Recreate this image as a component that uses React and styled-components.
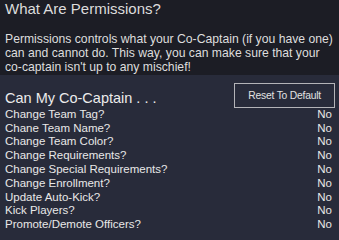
import styled, { createGlobalStyle } from "styled-components";

const GlobalStyle = createGlobalStyle`
  html, body {
    margin: 0;
    padding: 0;
    height: 100%;
    background: #282b3a;
  }

  #root {
    height: 100%;
  }
`

const Page = styled.div`
  height: 100%;
  display: flex;
  flex-direction: column;
  font-family: "Liberation Sans", Arial, sans-serif;
  color: #e4e4e4;
`

const Intro = styled.section`
  background: #1c1d25;
  padding: 0 2px 0 5px;
`

const Title = styled.h1`
  margin: 0;
  font-size: 15px;
  font-weight: normal;
  line-height: normal;
  color: #dcdcdc;
`

const Blurb = styled.p`
  margin: 16.4px 0 0;
  font-size: 12.2px;
  line-height: 13.8px;
  color: #dedede;
`

const Settings = styled.section`
  flex: 1;
  background: #282b3a;
  padding: 8px 4px 0 5px;
`

const Header = styled.div`
  display: flex;
  justify-content: space-between;
  align-items: flex-end;
`

const Subtitle = styled.h2`
  margin: 0 0 2px;
  font-size: 14.5px;
  font-weight: normal;
  line-height: normal;
  color: #ececec;
`

const ResetButton = styled.button`
  height: 25px;
  padding: 0 13px;
  background: transparent;
  border: 1px solid #b4b4b8;
  color: #e2e2e2;
  font-family: inherit;
  font-size: 10.3px;
  letter-spacing: -0.2px;
  cursor: pointer;
`

const List = styled.ul`
  list-style: none;
  margin: 0;
  padding: 0 3px 0 0;
`

const Row = styled.li`
  display: flex;
  justify-content: space-between;
  font-size: 11.5px;
  line-height: 13.8px;
  color: #e8e8e8;
`

const permissions = [
  "Change Team Tag?",
  "Chane Team Name?",
  "Change Team Color?",
  "Change Requirements?",
  "Change Special Requirements?",
  "Change Enrollment?",
  "Update Auto-Kick?",
  "Kick Players?",
  "Promote/Demote Officers?",
]

const App = () => {
  return (
    <Page>
      <GlobalStyle/>
      <Intro>
        <Title>What Are Permissions?</Title>
        <Blurb>
          Permissions controls what your Co-Captain (if you have one) can and cannot do. This way, you
          can make sure that your co-captain isn't up to any mischief!
        </Blurb>
      </Intro>
      <Settings>
        <Header>
          <Subtitle>Can My Co-Captain . . .</Subtitle>
          <ResetButton>Reset To Default</ResetButton>
        </Header>
        <List>
          {permissions.map(label => (
            <Row key={label}>
              <span>{label}</span>
              <span>No</span>
            </Row>
          ))}
        </List>
      </Settings>
    </Page>
  )
}

export default App
